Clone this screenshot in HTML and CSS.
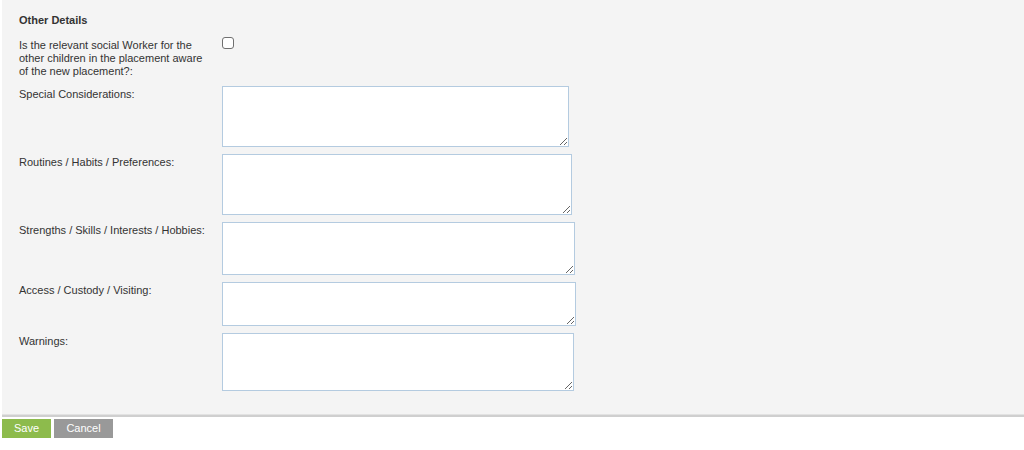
FILE: index.html
```html
<!DOCTYPE html>
<html lang="en">
<head>
<meta charset="utf-8">
<title>Other Details</title>
<link rel="stylesheet" href="styles.css">
</head>
<body>
<div class="page">
  <form class="panel">
    <h3 class="heading">Other Details</h3>
    <div class="row row-check">
      <label class="label label-check" for="aware">Is the relevant social Worker for the other children in the placement aware of the new placement?:</label>
      <div class="field"><input type="checkbox" id="aware" class="check"></div>
    </div>
    <div class="row">
      <label class="label" for="t1">Special Considerations:</label>
      <div class="field"><textarea id="t1" class="ta ta1"></textarea></div>
    </div>
    <div class="row">
      <label class="label" for="t2">Routines / Habits / Preferences:</label>
      <div class="field"><textarea id="t2" class="ta ta2"></textarea></div>
    </div>
    <div class="row">
      <label class="label" for="t3">Strengths / Skills / Interests / Hobbies:</label>
      <div class="field"><textarea id="t3" class="ta ta3"></textarea></div>
    </div>
    <div class="row">
      <label class="label" for="t4">Access / Custody / Visiting:</label>
      <div class="field"><textarea id="t4" class="ta ta4"></textarea></div>
    </div>
    <div class="row row-last">
      <label class="label" for="t5">Warnings:</label>
      <div class="field"><textarea id="t5" class="ta ta5"></textarea></div>
    </div>
  </form>
  <div class="actions">
    <button type="button" class="btn btn-save">Save</button>
    <button type="button" class="btn btn-cancel">Cancel</button>
  </div>
</div>
</body>
</html>
```

FILE: styles.css
```css
html, body {
  margin: 0;
  padding: 0;
  background: #ffffff;
}

body {
  font-family: "Liberation Sans", Arial, Helvetica, sans-serif;
  font-size: 11px;
  line-height: 13px;
  color: #333333;
}

.page {
  padding-left: 2px;
}

.panel {
  display: block;
  background: #f4f4f4;
  padding: 14px 0 24px 17px;
  border-bottom: 2px solid #cfcfcf;
  box-shadow: inset 0 -1px 0 #e2e2e2;
}

.heading {
  margin: 0 0 10px 0;
  font-size: 11px;
  line-height: 13px;
  font-weight: bold;
  color: #333333;
}

.row {
  display: flex;
  align-items: flex-start;
  margin-bottom: 7px;
}

.row-check {
  margin-bottom: 9px;
}

.row-last {
  margin-bottom: 0;
}

.label {
  flex: 0 0 203px;
  width: 203px;
  box-sizing: border-box;
  padding: 2px 14px 0 0;
}

.label-check {
  padding-top: 2px;
  height: 40px;
}

.field {
  display: flex;
}

.check {
  appearance: none;
  -webkit-appearance: none;
  margin: 0;
  width: 12px;
  height: 12px;
  border: 1px solid #707070;
  border-radius: 3px;
  background: #ffffff;
  box-sizing: border-box;
}

.ta {
  display: block;
  margin: 0;
  box-sizing: border-box;
  border: 1px solid #b4cbe0;
  background: #ffffff;
  font-family: "Liberation Sans", Arial, sans-serif;
  font-size: 11px;
  padding: 2px;
  resize: both;
}

.ta1 { width: 347px; height: 61px; }
.ta2 { width: 350px; height: 61px; }
.ta3 { width: 353px; height: 53px; }
.ta4 { width: 354px; height: 44px; }
.ta5 { width: 352px; height: 58px; }

.actions {
  display: flex;
  gap: 3px;
  margin-top: 2px;
}

.btn {
  border: 0;
  margin: 0;
  height: 19px;
  padding: 0;
  font-family: "Liberation Sans", Arial, sans-serif;
  font-size: 11px;
  line-height: 19px;
  color: #ffffff;
  cursor: pointer;
}

.btn-save {
  background: #8dbb4c;
  width: 49px;
}

.btn-cancel {
  background: #999999;
  width: 59px;
}
```
